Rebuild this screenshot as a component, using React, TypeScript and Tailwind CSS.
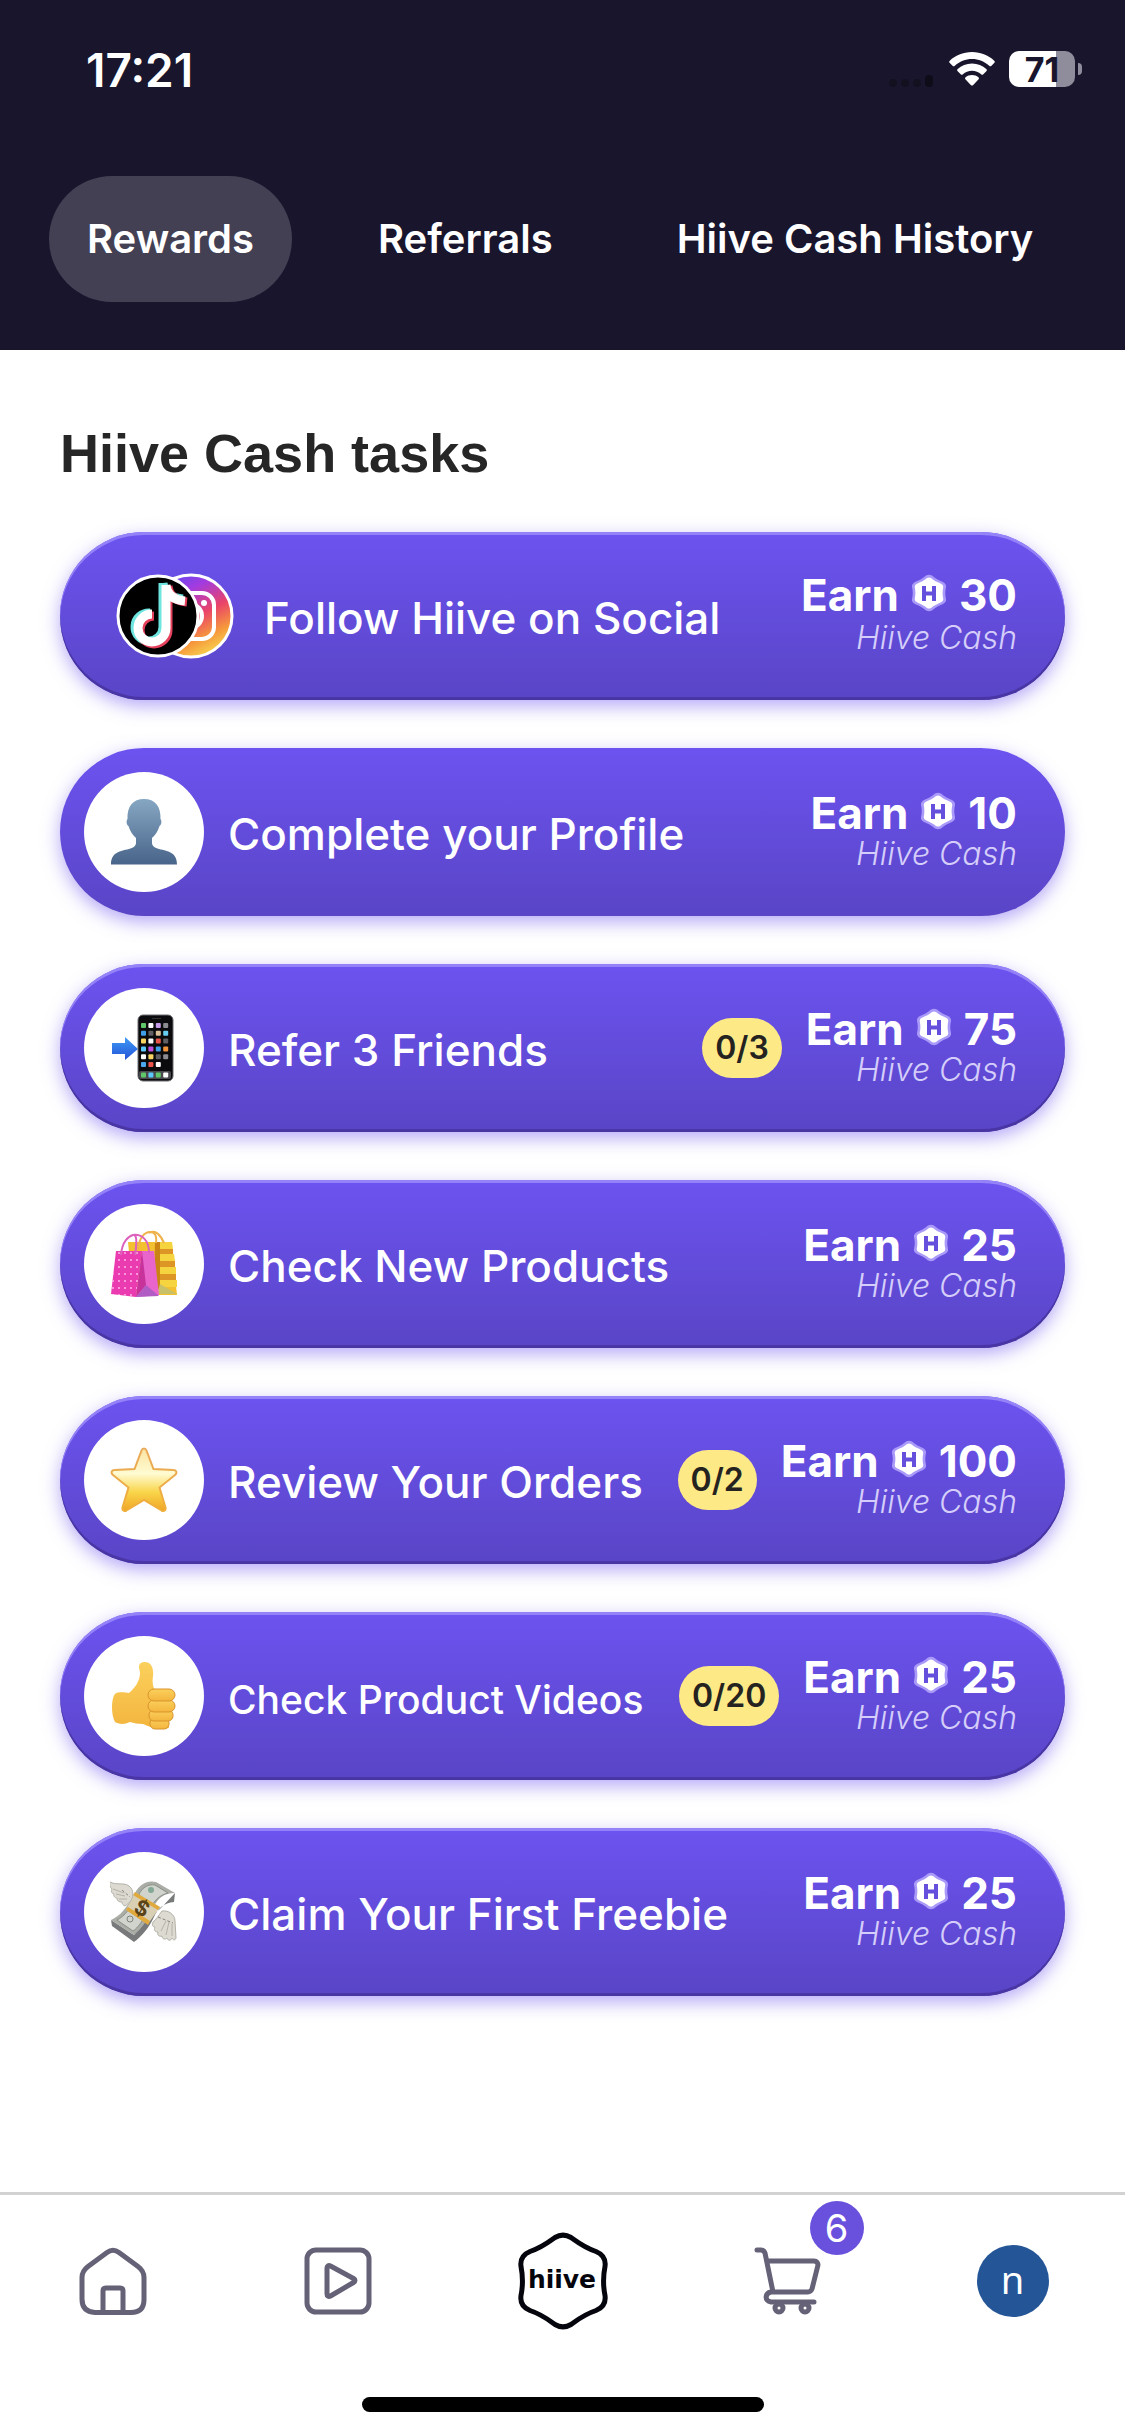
import { useState } from 'react'
import type { ReactNode } from 'react'
import { clsx } from 'clsx'

interface Task {
  title: string
  reward: number
  icon: ReactNode
  progress?: string
  small?: boolean
  flat?: boolean
  bareIcon?: boolean
}

const TABS = ['Rewards', 'Referrals', 'Hiive Cash History']

function WifiIcon() {
  return (
    <svg width="46" height="34" viewBox="0 0 46 34" fill="white" aria-hidden="true">
      <path d="M23 0C14 0 6 3.5 0.8 8.7c-.8.8-.8 1.6 0 2.300l2.700 2.700c.8.8 1.600.7 2.300 0C10.400 9.5 16.500 7 23 7s12.600 2.500 17.200 6.700c.7.7 1.500.8 2.300 0l2.700-2.700c.8-.7.8-1.500 0-2.300C40 3.500 32 0 23 0z" />
      <path d="M23 11.500c-5.600 0-10.700 2.100-14.300 5.600-.8.8-.7 1.500 0 2.200l3 2.900c.7.7 1.400.7 2.200 0 2.500-2.200 5.600-3.500 9.100-3.500s6.600 1.300 9.100 3.500c.8.7 1.500.7 2.200 0l3-2.900c.7-.7.8-1.400 0-2.200-3.600-3.500-8.700-5.600-14.300-5.600z" />
      <path d="M23 23c-2.500 0-4.700.9-6.400 2.300-.8.7-.7 1.500 0 2.200l5.200 5.400c.8.8 1.600.8 2.400 0l5.200-5.400c.7-.7.8-1.500 0-2.200C27.700 23.900 25.500 23 23 23z" />
    </svg>
  )
}

function SocialIcons() {
  return (
    <svg width="118" height="86" viewBox="0 0 118 86" aria-hidden="true">
      <defs>
        <linearGradient id="insta" x1="0.2" y1="0" x2="0.7" y2="1">
          <stop offset="0" stopColor="#5a4bf0" />
          <stop offset="0.25" stopColor="#a23be0" />
          <stop offset="0.55" stopColor="#ea4468" />
          <stop offset="0.8" stopColor="#f69a3c" />
          <stop offset="1" stopColor="#f7d84f" />
        </linearGradient>
      </defs>
      <circle cx="75" cy="43" r="41" fill="url(#insta)" stroke="white" strokeWidth="3" />
      <rect x="51" y="20" width="47" height="46" rx="12" fill="none" stroke="white" strokeWidth="4" />
      <circle cx="74" cy="43" r="12" fill="none" stroke="white" strokeWidth="4" />
      <circle cx="88" cy="30" r="3" fill="white" />
      <circle cx="42" cy="43" r="40" fill="black" stroke="white" strokeWidth="3" />
      <g fill="none" strokeWidth="9">
        <path d="M47 10v44a14 14 0 1 1-13-14M47 10c1 10 8 15 20 16" stroke="#6ee5df" />
        <path d="M52 13v44a14 14 0 1 1-14-14M52 13c1 10 8 15 19 16" stroke="#e5405c" />
        <path d="M50 12v43a14 14 0 1 1-14-14M50 12c1 10 8 15 19 16" stroke="white" />
      </g>
    </svg>
  )
}

function ProfileIcon() {
  return (
    <svg width="66" height="66" viewBox="0 0 66 66" aria-hidden="true">
      <defs>
        <linearGradient id="bust" x1="0" y1="0" x2="0" y2="1">
          <stop offset="0" stopColor="#86a7c2" />
          <stop offset="1" stopColor="#48648a" />
        </linearGradient>
      </defs>
      <path
        fill="url(#bust)"
        d="M33 0c11 0 17 7 16.500 20 1.500 2 1 6-1 7-1.500 5-4 9-7.500 12v5c0 3 3 5 7 6 10 2 18 4 18 15.500H0C0 54 8 52 18 50c4-1 7-3 7-6v-5c-3.500-3-6-7-7.500-12-2-1-2.500-5-1-7C16 7 22 0 33 0z"
      />
    </svg>
  )
}

const APP_COLORS = [
  '#5fc96a', '#ffffff', '#c79be8', '#8c8c90',
  '#3f9fe8', '#5f5f63', '#d9bf9a', '#65cdf0',
  '#f7d560', '#ffffff', '#e8544a', '#5f5f63',
  '#5ac8fa', '#c04ee0', '#3f9fe8', '#f2933a',
  '#ffffff', '#f7d560', '#5f5f63', '#8c8c90',
  '#4aa8ee', '#e8544a', '#ffffff',
]

const DOCK_COLORS = ['#5fc96a', '#5ac8fa', '#5fc96a', '#ffffff']

function PhoneIcon() {
  return (
    <svg width="66" height="68" viewBox="0 0 66 68" aria-hidden="true">
      <defs>
        <linearGradient id="arrow" x1="0" y1="0" x2="0" y2="1">
          <stop offset="0" stopColor="#3f9cf5" />
          <stop offset="1" stopColor="#2352d8" />
        </linearGradient>
      </defs>
      <rect x="27" y="1" width="35" height="66" rx="5" fill="#0b0b0d" stroke="#6b6b70" strokeWidth="1" />
      <rect x="41" y="4" width="9" height="1" fill="#333" />
      {APP_COLORS.map((color, i) => (
        <rect
          key={i}
          x={30 + (i % 4) * 7.4}
          y={9 + Math.floor(i / 4) * 7.8}
          width="5"
          height="5"
          rx="1"
          fill={color}
        />
      ))}
      <rect x="28" y="57" width="32" height="8" rx="2" fill="#4a4a4e" />
      {DOCK_COLORS.map((color, i) => (
        <rect key={i} x={30 + i * 7.4} y="58.5" width="5" height="5" rx="1" fill={color} />
      ))}
      <path fill="url(#arrow)" d="M1 29h13v-6l13 12-13 11v-6H1z" />
    </svg>
  )
}

function BagsIcon() {
  return (
    <svg width="66" height="68" viewBox="0 0 66 68" aria-hidden="true">
      <defs>
        <pattern id="dots" width="6" height="7" patternUnits="userSpaceOnUse">
          <circle cx="2" cy="2" r="0.9" fill="#ffc2ef" />
        </pattern>
      </defs>
      <path d="M17 12h43l6 53H22z" fill="#f3c02f" />
      <path d="M49 12h12l1 7H49zM49 24h14l1 7H49zM49 37h16v7H49zM49 50h17l1 7H49z" fill="#f6d43f" />
      <path d="M48 19h14v5H48zM48 31h16v6H48zM48 44h17v6H48z" fill="#dd9625" />
      <path d="M44 12h5v46l-6 4z" fill="#c98414" />
      <path d="M49 54l17 10H46z" fill="#c9c06a" />
      <path d="M27 20C28 7 34 2 39 2s7 4 6 11M38 3c7-4 12 3 15 10" fill="none" stroke="#f0b24a" strokeWidth="2" />
      <path d="M5 21h26l-6 46-25-3z" fill="#ea3bb0" />
      <path d="M5 21h26l-6 46-25-3z" fill="url(#dots)" />
      <path d="M31 21h12l5 44-23 2z" fill="#e965cc" />
      <path d="M31 21l4 34-10 12z" fill="#c8329b" />
      <path d="M35 55l13 11-23 1z" fill="#b05cc4" />
      <path d="M10 25C11 11 18 6 22 5s4 7 2 20M22 5c8-1 16 4 16 18" fill="none" stroke="#dd62bd" strokeWidth="2" />
    </svg>
  )
}

function StarIcon() {
  return (
    <svg width="68" height="66" viewBox="0 0 68 66" aria-hidden="true">
      <defs>
        <linearGradient id="star" x1="0" y1="0" x2="0" y2="1">
          <stop offset="0" stopColor="#fbe3a0" />
          <stop offset="0.4" stopColor="#fffbd2" />
          <stop offset="0.7" stopColor="#f9d54a" />
          <stop offset="1" stopColor="#f0a527" />
        </linearGradient>
        <linearGradient id="starEdge" x1="0" y1="0" x2="0" y2="1">
          <stop offset="0" stopColor="#e8a95a" />
          <stop offset="1" stopColor="#f0ae3a" />
        </linearGradient>
      </defs>
      <path
        d="M31.500 3.500c1-2.600 4-2.600 5 0L43.500 22l20 1c3 0 4 3 1.500 5L49.500 40.500l6 20c.7 2.700-1.500 4.300-4 3L34 53 16.500 63.500c-2.500 1.300-4.700-.3-4-3l6-20L3 28c-2.500-2-1.500-5 1.500-5l20-1z"
        fill="url(#star)"
        stroke="url(#starEdge)"
        strokeWidth="2"
      />
    </svg>
  )
}

function ThumbIcon() {
  return (
    <svg width="64" height="68" viewBox="0 0 64 68" aria-hidden="true">
      <defs>
        <linearGradient id="skin" x1="0" y1="0" x2="0" y2="1">
          <stop offset="0" stopColor="#fbd05c" />
          <stop offset="1" stopColor="#f3b53e" />
        </linearGradient>
      </defs>
      <path
        fill="url(#skin)"
        d="M27 5c0-4 3-5 6-5 6 0 9 6 8 14-1 7 0 12 3 15L57 66c-8 2-20-1-26-4-5 0-9-1-13-2-6 3-12 2-15 0C-1 53-1 37 3 32c4-3 11-1 14-1 7-6 11-13 11-20 0-2-1-4-1-6z"
      />
      <g fill="url(#skin)" stroke="#d9932b" strokeWidth="1">
        <rect x="38" y="56" width="19" height="11" rx="5" />
        <rect x="37" y="48" width="24" height="11" rx="5" />
        <rect x="36" y="38" width="27" height="12" rx="6" />
        <rect x="36" y="27" width="27" height="12" rx="6" />
      </g>
    </svg>
  )
}

function MoneyIcon() {
  return (
    <svg width="68" height="62" viewBox="0 0 68 62" aria-hidden="true">
      <path d="M1 39l23 15 10-14 16-12 15-16-1 9c-10 1-16 6-20 15-5 11-13 20-20 25L2 45z" fill="#77797a" />
      <path d="M25 12C30 3 37-1 46 1l19 11c-11 0-17 5-22 15-5 12-12 21-19 27L1 39c9-4 15-11 24-27z" fill="#a9ada6" />
      <path d="M29 13C33 6 38 3 45 4l13 8c-8 2-13 7-17 14z" fill="#d0d4cc" stroke="#8a8f87" strokeWidth="1" />
      <path d="M7 39c6-3 9-7 12-11l14 10c-3 6-7 10-10 12z" fill="#d0d4cc" stroke="#8a8f87" strokeWidth="1" />
      <circle cx="41" cy="9" r="3" fill="#82a995" />
      <circle cx="20" cy="38" r="3" fill="none" stroke="#7f857c" strokeWidth="1" />
      <path d="M25 11l25 15-12 17-22-14z" fill="#d9cfb3" />
      <path d="M25 11l25 15-2 3-25-15zM18 26l22 14-2 4-22-15z" fill="#e0a93e" />
      <text x="32" y="34" textAnchor="middle" fontSize="21" fontWeight="700" fill="#5b4318" fontFamily="Inter, sans-serif" transform="rotate(28 31 27)">$</text>
      <g fill="#dddbd1" stroke="#b3b2a8" strokeWidth="1">
        <path d="M0 1c7 4 16-1 21 6 3 4 2 10-1 14l-5 4c-2-1-3-2-3-4-3 0-5-1-5-4-2 0-4-2-3-4-3-1-3-3-2-5-2-2-3-4-2-7z" />
        <path d="M52 30c7-1 13 4 13 10l1 17c-1 3-3 2-4 0-1 3-4 3-5 0-2 2-5 1-5-2-3 1-5-1-4-4-4 0-4-3-3-5-3 0-3-3-2-5 3-2 5-6 9-11z" />
      </g>
      <path d="M3 8l11 4M6 13l9 2M9 18l8 0M51 50l5-10M56 54l3-13M62 55l0-12" stroke="#b3b2a8" strokeWidth="1" fill="none" />
      <path d="M12 9l8 7M48 36l15 6" stroke="#86857c" strokeWidth="1" strokeDasharray="3 2" fill="none" />
    </svg>
  )
}

function CashIcon() {
  return (
    <svg width="36" height="38" viewBox="0 0 36 38" className="mb-1" aria-hidden="true">
      <path
        d="M15 1.500c2-1 4-1 6 0 4 3.500 7 5 11 6.500 2 1 3.500 3 3 5-1 4-1 8 0 12 .5 2-1 4-3 5-4 1.500-7 3-11 6.500-2 1-4 1-6 0-4-3.500-7-5-11-6.500-2-1-3.500-3-3-5 1-4 1-8 0-12-.5-2 1-4 3-5 4-1.500 7-3 11-6.500z"
        fill="#a99afa"
      />
      <path
        d="M16 4c1.500-.8 2.500-.8 4 0 3 2.500 6 4 9.500 5.500 2 .8 3 2 2.700 4-.8 4-.8 7 0 11 .3 2-.7 3.200-2.700 4C26 30 23 31.500 20 34c-1.500.8-2.500.8-4 0-3-2.500-6-4-9.500-5.500-2-.8-3-2-2.700-4 .8-4 .8-7 0-11-.3-2 .7-3.200 2.700-4C10 8 13 6.500 16 4z"
        fill="white"
      />
      <path d="M13 12v15M23 12v15M13 19.500h10" stroke="#6450dc" strokeWidth="4" fill="none" />
    </svg>
  )
}

const TASKS: Task[] = [
  { title: 'Follow Hiive on Social', reward: 30, icon: <SocialIcons />, bareIcon: true },
  { title: 'Complete your Profile', reward: 10, icon: <ProfileIcon />, flat: true },
  { title: 'Refer 3 Friends', reward: 75, icon: <PhoneIcon />, progress: '0/3' },
  { title: 'Check New Products', reward: 25, icon: <BagsIcon /> },
  { title: 'Review Your Orders', reward: 100, icon: <StarIcon />, progress: '0/2' },
  { title: 'Check Product Videos', reward: 25, icon: <ThumbIcon />, progress: '0/20', small: true },
  { title: 'Claim Your First Freebie', reward: 25, icon: <MoneyIcon /> },
]

function TaskCard({ task }: { task: Task }) {
  return (
    <button
      className={clsx(
        'flex h-[168px] w-full items-center rounded-full bg-linear-to-b from-[#6c53f0] to-[#5945c6] pr-12 pl-6 text-left text-white',
        task.flat
          ? 'shadow-[0_6px_18px_rgba(108,83,240,0.5)]'
          : 'shadow-[0_6px_18px_rgba(108,83,240,0.5),inset_0_3px_0_#9382f8,inset_0_-3px_0_#4935a4]'
      )}
    >
      {task.bareIcon ? (
        <span className="ml-8 shrink-0">{task.icon}</span>
      ) : (
        <span className="flex size-[120px] shrink-0 items-center justify-center rounded-full bg-white">
          {task.icon}
        </span>
      )}
      <span
        className={clsx(
          'flex-1 font-medium whitespace-nowrap',
          task.bareIcon ? 'ml-[30px]' : 'ml-6',
          task.small ? 'pt-2 text-[39px]' : 'pt-1 text-[44px]'
        )}
      >
        {task.title}
      </span>
      {task.progress && (
        <span className="mr-6 flex h-15 items-center rounded-full bg-[#fde986] px-[13px] text-[32px] font-semibold text-[#25231f]">
          {task.progress}
        </span>
      )}
      <span className={clsx('flex flex-col items-end', task.bareIcon ? 'pb-2' : 'pb-1')}>
        <span
          className={clsx(
            'flex items-center gap-3 text-[44px] font-bold',
            task.bareIcon ? 'leading-[52px]' : 'leading-[48px]'
          )}
        >
          Earn
          <CashIcon />
          {task.reward}
        </span>
        <span className="text-[32px] leading-[34px] font-light text-[#d5cefa] italic">Hiive Cash</span>
      </span>
    </button>
  )
}

function BottomNav() {
  return (
    <nav className="grid h-[244px] grid-cols-5 content-start justify-items-center border-t-3 border-[#d2d2d2] bg-white pt-[34px] text-[#656177]">
      <a href="#home" aria-label="Home" className="flex h-26 items-center">
        <svg width="68" height="68" viewBox="0 0 68 68" fill="none" stroke="currentColor" strokeWidth="5">
          <path d="M28 5.500c4-3 8-3 12 0l19 14c4 3 6 7 6 11v22c0 8-4 13-13 13H16C7 65 3 60 3 52V30.500c0-4 2-8 6-11z" />
          <path d="M24 65V44c0-2 1-3 3-3h14c2 0 3 1 3 3v21" />
        </svg>
      </a>
      <a href="#videos" aria-label="Videos" className="flex h-26 items-center">
        <svg width="68" height="68" viewBox="0 0 68 68" fill="none" stroke="currentColor" strokeWidth="5" strokeLinejoin="round">
          <rect x="3" y="3" width="62" height="62" rx="9" />
          <path d="M23 21c0-2 1.500-3 3.500-2l23 12.500c2 1.200 2 2.800 0 4L26.500 49c-2 1-3.500 0-3.500-2z" />
        </svg>
      </a>
      <a href="#hiive" aria-label="Hiive" className="flex h-26 items-center">
        <svg width="92" height="98" viewBox="0 0 92 98">
          <path
            d="M38 5.500c5-3 11-3 16 0 7 5 13 10 25 14 7 3 10 8 9 15-2 10-2 19 0 29 1 7-2 12-9 15-12 4-18 9-25 14-5 3-11 3-16 0-7-5-13-10-25-14-7-3-10-8-9-15 2-10 2-19 0-29-1-7 2-12 9-15 12-4 18-9 25-14z"
            fill="none"
            stroke="#05050d"
            strokeWidth="5"
          />
          <text x="45" y="56" textAnchor="middle" fontSize="25" fontWeight="700" fontFamily="'DejaVu Sans', sans-serif" fill="#05050d">
            hiive
          </text>
        </svg>
      </a>
      <a href="#cart" aria-label="Cart" className="relative flex h-26 items-center">
        <svg width="68" height="68" viewBox="0 0 68 68" fill="none" stroke="currentColor" strokeWidth="5" strokeLinecap="round" strokeLinejoin="round">
          <path d="M3 3h4c2 0 3 1 4 3l8 39M13 14h47c3 0 4 2 4 4l-6 24c-1 2-2 3-4 3H17c-6 1-7 9 0 10h43" />
          <circle cx="25" cy="61" r="4" />
          <circle cx="51" cy="61" r="4" />
        </svg>
        <span className="absolute -top-7 left-14 flex size-[54px] items-center justify-center rounded-full bg-[#6950dd] text-[38px] text-white">
          6
        </span>
      </a>
      <a href="#account" aria-label="Account" className="flex h-26 items-center">
        <span className="flex size-18 items-center justify-center rounded-full bg-[#245697] pb-1 font-['Noto_Sans',sans-serif] text-[38px] text-white">
          n
        </span>
      </a>
      <span className="col-span-5 mt-16 h-[15px] w-[402px] rounded-full bg-black" />
    </nav>
  )
}

export default function App() {
  const [tab, setTab] = useState(TABS[0])

  return (
    <div className="flex min-h-screen flex-col bg-white font-['Inter',sans-serif]">
      <header className="bg-[#18152c] pb-12 text-white">
        <div className="flex h-[176px] items-start justify-between pt-[46px] pr-[43px] pl-[86px]">
          <span className="text-[46px] leading-[48px] font-semibold">17:21</span>
          <div className="flex items-center pt-[5px]">
            <div className="mr-4 flex items-end gap-1 self-end">
              <span className="h-2 w-2 rounded-sm bg-[#131120]" />
              <span className="h-2 w-2 rounded-sm bg-[#131120]" />
              <span className="h-2 w-2 rounded-sm bg-[#131120]" />
              <span className="h-3 w-2 rounded-sm bg-[#0e0c18]" />
            </div>
            <WifiIcon />
            <div className="ml-[14px] flex h-9 w-[66px] items-center justify-center rounded-[10px] bg-linear-to-r from-white from-71% to-[#8f8c9c] to-71% text-[34px] font-bold text-[#18152c]">
              71
            </div>
            <span className="ml-[3px] h-3 w-1 rounded-r-full bg-[#8f8c9c]" />
          </div>
        </div>
        <div className="flex gap-12 pl-[49px]">
          {TABS.map(name => (
            <button
              key={name}
              onClick={() => setTab(name)}
              className={clsx(
                'h-[126px] rounded-full px-[38px] text-[40px] font-semibold whitespace-nowrap',
                tab === name && 'bg-[#434054]'
              )}
            >
              {name}
            </button>
          ))}
        </div>
      </header>

      <main className="flex-1 px-[60px] pt-[72px]">
        <h1 className="font-['Liberation_Sans',sans-serif] text-[54px] leading-[62px] font-bold text-[#262626]">
          Hiive Cash tasks
        </h1>
        <div className="mt-12 flex flex-col gap-12">
          {TASKS.map(task => (
            <TaskCard key={task.title} task={task} />
          ))}
        </div>
      </main>

      <BottomNav />
    </div>
  )
}
